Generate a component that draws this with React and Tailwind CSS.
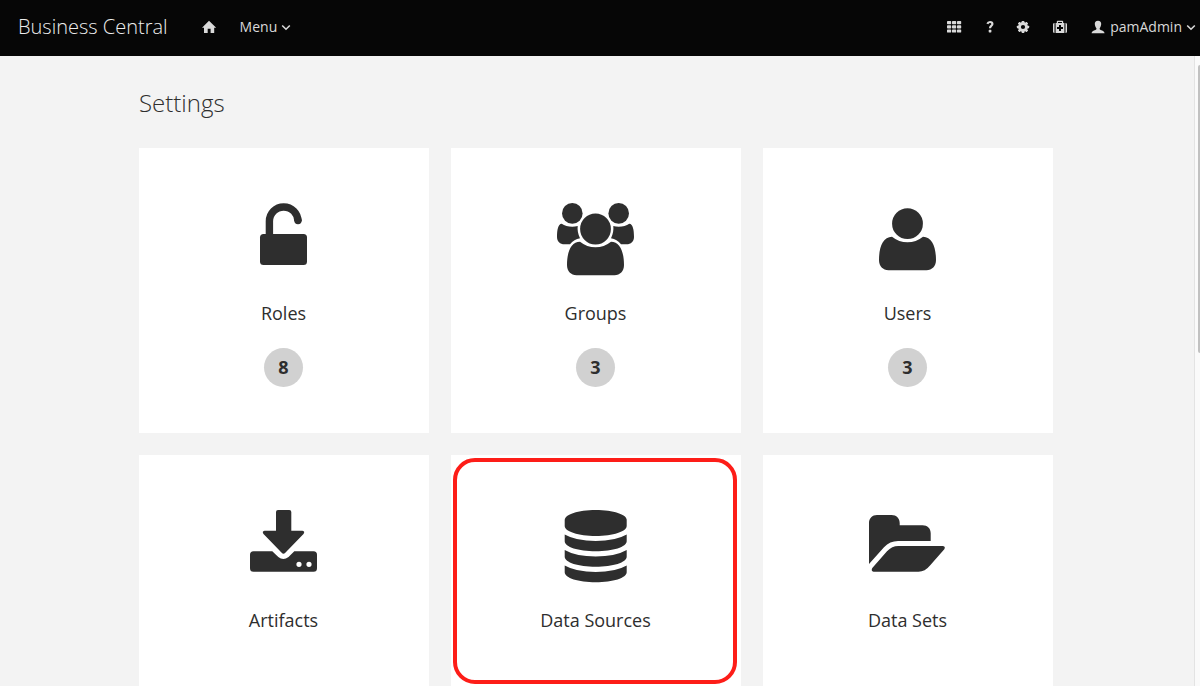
import React from "react";

function LockIcon() {
  return (
    <>
      <path d="M25.4 37V22.300a14.3 14.3 0 0 1 28.6 0V21.300" fill="none" stroke="currentColor" strokeWidth="7.4" />
      <circle cx="54" cy="21.600" r="3.700" />
      <rect x="16" y="35" width="47" height="31" rx="3.5" />
    </>
  );
}

const BODY =
  "M24 42.7Q31 48.3 39.5 48.3T55 42.7C64 42.7 68 53 68 66C68 72 64 76.3 58.5 76.3H20.500C15 76.3 11 72 11 66C11 53 15 42.7 24 42.7Z";
const SIDE =
  "M5.700 24.700Q10 27.700 16.300 27.700Q19 27.700 21.700 27Q21 33 24 39.300Q18 40.500 14 45.300H8.500C4 45.300 1 42.500 1 38C1 31 2 25 5.700 24.700Z";

function GroupIcon() {
  return (
    <>
      <circle cx="16.3" cy="14.4" r="10.3" />
      <circle cx="62.700" cy="14.4" r="10.3" />
      <path d={SIDE} />
      <path d={SIDE} transform="translate(79 0) scale(-1 1)" />
      <circle cx="39.5" cy="30" r="15.4" />
      <path d={BODY} />
    </>
  );
}

function UserIcon() {
  return (
    <g transform="translate(0 -5)">
      <circle cx="39.5" cy="29.700" r="15.4" />
      <path d={BODY} />
    </g>
  );
}

function DownloadIcon() {
  return (
    <>
      <path d="M34 4H45.300Q47.300 4 47.300 6V24.700H58.500Q61.300 25.200 59.500 28L41.300 46.800Q39.400 48.500 37.700 46.800L19.500 28Q17.700 25.200 20.500 24.700H32V6Q32 4 34 4Z" />
      <path
        fillRule="evenodd"
        d="M9.500 45.300H28.300L34.300 51Q39.300 55.200 44.500 51L50.300 45.300H69.500Q73 45.300 73 48.800V62.200Q73 65.700 69.500 65.700H9.500Q6 65.700 6 62.200V48.800Q6 45.300 9.500 45.300ZM52.400 58.300a2.600 2.600 0 1 0 5.200 0a2.600 2.600 0 1 0-5.200 0ZM62.400 58.300a2.600 2.600 0 1 0 5.200 0a2.600 2.600 0 1 0-5.200 0Z"
      />
    </>
  );
}

function DatabaseIcon() {
  const band = "M8.700 28.500Q20 35 39.700 35T70.700 28.500V35.300C70.700 41 57 45.300 39.700 45.300S8.700 41 8.700 35.300Z";
  return (
    <>
      <path d="M8.700 14C8.700 8.500 22 4 39.700 4S70.700 8.500 70.700 14V20C70.700 25.500 57 30 39.700 30S8.700 25.500 8.700 20Z" />
      <path d={band} />
      <path d={band} transform="translate(0 15.4)" />
      <path d={band} transform="translate(0 30.900)" />
    </>
  );
}

function FolderIcon() {
  return (
    <>
      <path d="M9 9H23.500C28.500 9 31.700 12.500 31.700 17V19.300H54.500C59.500 19.300 62.700 22.500 62.700 27.300V35H30C24.500 35 20 37 16 41.300L1 58V17C1 12.500 4.300 9 9 9Z" />
      <path d="M30.300 40H75Q77.800 40.500 76.300 43.300L62 59.500Q57 65.700 50.500 65.700H5.500Q2.700 65 4.300 62L19 45.300Q24 40 30.300 40Z" />
    </>
  );
}

const CARDS = [
  { name: "Roles", count: 8, Icon: LockIcon },
  { name: "Groups", count: 3, Icon: GroupIcon },
  { name: "Users", count: 3, Icon: UserIcon },
  { name: "Artifacts", Icon: DownloadIcon },
  { name: "Data Sources", Icon: DatabaseIcon, marked: true },
  { name: "Data Sets", Icon: FolderIcon },
];

function Card({ name, count, Icon, marked }) {
  return (
    <a href="#" className="relative flex h-[285px] flex-col items-center bg-white pt-[51px] pr-px text-[#2e2e2e]">
      <svg className="h-20 w-[81px]" viewBox="-1 0 81 80" fill="currentColor" aria-hidden="true">
        <Icon />
      </svg>
      <span className="mt-[22px] text-[18px] leading-6">{name}</span>
      {count !== undefined && (
        <span className="mt-[23px] flex size-[39px] items-center justify-center rounded-full bg-[#d1d1d1] pb-[2px] text-[18px] leading-6 font-bold">
          {count}
        </span>
      )}
      {marked && (
        <span className="pointer-events-none absolute top-[3px] left-[2px] h-[226px] w-[284px] rounded-[22px] border-4 border-[#fd1d18]" />
      )}
    </a>
  );
}

function NavIcon({ children }) {
  return (
    <svg className="size-4 shrink-0" viewBox="0 0 16 16" fill="currentColor" aria-hidden="true">
      {children}
    </svg>
  );
}

function Chevron() {
  return (
    <svg className="h-2 w-[10px] shrink-0" viewBox="0 0 10 8" fill="none" stroke="currentColor" strokeWidth="1.600" aria-hidden="true">
      <path d="M1.200 2.500L5 6.200L8.800 2.500" />
    </svg>
  );
}

function Header() {
  return (
    <header className="flex h-14 shrink-0 items-center bg-[#060606] pl-[18px] pr-1 pb-[2px] text-[14px] leading-5 text-[#d9d9d9]">
      <a href="#" className="text-[20px] leading-8 font-light text-[#ededed]">
        Business Central
      </a>
      <nav className="flex flex-1 items-center pl-[33px]">
        <button type="button" aria-label="Home">
          <NavIcon>
            <path d="M8 1.700L15.200 8.700H13.200V14H9.600V9.800H6.700V14H3V8.700H1Z" />
          </NavIcon>
        </button>
        <button type="button" className="ml-[23px] flex items-center gap-1">
          Menu
          <Chevron />
        </button>
      </nav>
      <nav className="flex items-center">
        <button type="button" aria-label="Applications">
          <NavIcon>
            {[2, 6.200, 10.400].map((y) =>
              [1, 6, 11].map((x) => <rect key={`${x}-${y}`} x={x} y={y} width="4.200" height="3.200" rx="0.700" />)
            )}
          </NavIcon>
        </button>
        <button type="button" aria-label="Help" className="ml-5">
          <NavIcon>
            <path
              d="M5.400 4.900C5.800 3.700 6.700 3 8 3C9.500 3 10.400 3.800 10.400 5C10.400 6.700 8 7 8 9.300"
              fill="none"
              stroke="currentColor"
              strokeWidth="2.200"
            />
            <rect x="6.700" y="10.800" width="2.700" height="2.600" rx="0.600" />
          </NavIcon>
        </button>
        <button type="button" aria-label="Settings" className="ml-[17px]">
          <NavIcon>
            <circle cx="8" cy="8" r="3.500" fill="none" stroke="currentColor" strokeWidth="2.800" />
            {[0, 45, 90, 135, 180, 225, 270, 315].map((a) => (
              <rect key={a} x="6.700" y="1.900" width="2.600" height="2.600" rx="0.500" transform={`rotate(${a} 8 8)`} />
            ))}
          </NavIcon>
        </button>
        <button type="button" aria-label="Administration" className="ml-[21px]">
          <NavIcon>
            <path d="M2.500 3.900V14C1.500 14 1 13.300 1 12.500V5.400C1 4.500 1.500 3.900 2.500 3.900ZM13.500 3.900C14.500 3.900 15 4.500 15 5.400V12.500C15 13.300 14.500 14 13.500 14Z" />
            <path
              fillRule="evenodd"
              d="M3.600 3.900H4.800V2.500Q4.800 1.700 5.600 1.700H10.400Q11.200 1.700 11.200 2.500V3.900H12.400V14H3.600ZM6 3.900H10V2.900H6ZM7 6V8H5V10H7V12H9V10H11V8H9V6Z"
            />
          </NavIcon>
        </button>
        <button type="button" className="ml-[22px] flex items-center gap-1">
          <NavIcon>
            <path d="M8 1.800C10.300 1.800 11.300 3.200 11.200 5C11.100 7 10.300 8.300 9.700 9.200V10.200C10.200 11.300 14.200 11.200 14.600 14.200H1.600C2 11.200 5.900 11.300 6.400 10.200V9.200C5.700 8.300 4.900 7 4.800 5C4.700 3.200 5.700 1.800 8 1.800Z" />
          </NavIcon>
          pamAdmin
          <Chevron />
        </button>
      </nav>
    </header>
  );
}

export default function App() {
  return (
    <div className="flex h-screen flex-col overflow-hidden bg-[#f3f3f3] font-['Open_Sans',sans-serif]">
      <Header />
      <div className="flex min-h-0 flex-1">
        <main className="min-w-0 flex-1 overflow-hidden pr-[2px]">
          <div className="mx-auto max-w-[914px] pt-[31px]">
            <h1 className="text-[24px] leading-8 font-light text-[#2e2e2e]">Settings</h1>
            <div className="mt-[29px] grid grid-cols-3 gap-[22px]">
              {CARDS.map((card) => (
                <Card key={card.name} {...card} />
              ))}
            </div>
          </div>
        </main>
        <div className="flex w-[6px] justify-end border-l border-[#e3e3e3] bg-[#fafafa] pt-[9px]" aria-hidden="true">
          <div className="h-[288px] w-[2px] rounded-l-sm bg-[#c1c1c1]" />
        </div>
      </div>
    </div>
  );
}
